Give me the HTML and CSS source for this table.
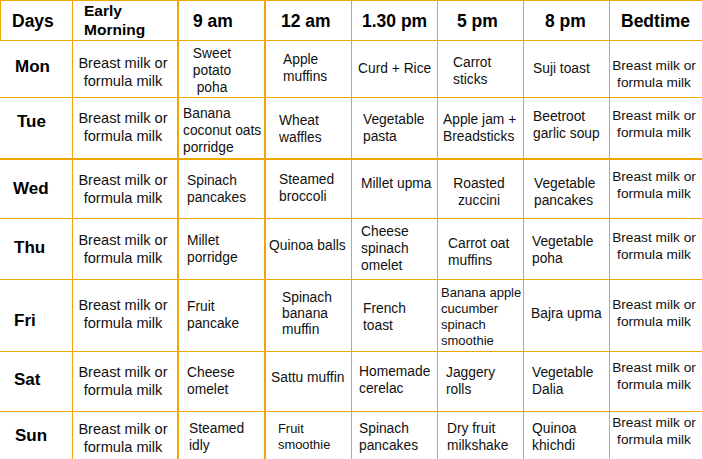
FILE: index.html
```html
<!DOCTYPE html>
<html lang="en">
<head>
<meta charset="utf-8">
<title>Baby diet chart</title>
<link rel="stylesheet" href="styles.css">
</head>
<body>
<div class="chart">
  <div class="row head">
    <div class="cell c1">Days</div>
    <div class="cell c2 early">Early<br>Morning</div>
    <div class="cell c3">9 am</div>
    <div class="cell c4">12 am</div>
    <div class="cell c5">1.30 pm</div>
    <div class="cell c6">5 pm</div>
    <div class="cell c7">8 pm</div>
    <div class="cell c8">Bedtime</div>
  </div>
  <div class="row mon">
    <div class="cell c1 day">Mon</div>
    <div class="cell c2">Breast milk or<br>formula milk</div>
    <div class="cell c3">Sweet<br>potato<br>poha</div>
    <div class="cell c4">Apple<br>muffins</div>
    <div class="cell c5">Curd + Rice</div>
    <div class="cell c6">Carrot<br>sticks</div>
    <div class="cell c7">Suji toast</div>
    <div class="cell c8">Breast milk or<br>formula milk</div>
  </div>
  <div class="row tue">
    <div class="cell c1 day">Tue</div>
    <div class="cell c2">Breast milk or<br>formula milk</div>
    <div class="cell c3">Banana<br>coconut oats<br>porridge</div>
    <div class="cell c4">Wheat<br>waffles</div>
    <div class="cell c5">Vegetable<br>pasta</div>
    <div class="cell c6">Apple jam +<br>Breadsticks</div>
    <div class="cell c7">Beetroot<br>garlic soup</div>
    <div class="cell c8">Breast milk or<br>formula milk</div>
  </div>
  <div class="row wed">
    <div class="cell c1 day">Wed</div>
    <div class="cell c2">Breast milk or<br>formula milk</div>
    <div class="cell c3">Spinach<br>pancakes</div>
    <div class="cell c4">Steamed<br>broccoli</div>
    <div class="cell c5">Millet upma</div>
    <div class="cell c6">Roasted<br>zuccini</div>
    <div class="cell c7">Vegetable<br>pancakes</div>
    <div class="cell c8">Breast milk or<br>formula milk</div>
  </div>
  <div class="row thu">
    <div class="cell c1 day">Thu</div>
    <div class="cell c2">Breast milk or<br>formula milk</div>
    <div class="cell c3">Millet<br>porridge</div>
    <div class="cell c4">Quinoa balls</div>
    <div class="cell c5">Cheese<br>spinach<br>omelet</div>
    <div class="cell c6">Carrot oat<br>muffins</div>
    <div class="cell c7">Vegetable<br>poha</div>
    <div class="cell c8">Breast milk or<br>formula milk</div>
  </div>
  <div class="row fri">
    <div class="cell c1 day">Fri</div>
    <div class="cell c2">Breast milk or<br>formula milk</div>
    <div class="cell c3">Fruit<br>pancake</div>
    <div class="cell c4">Spinach<br>banana<br>muffin</div>
    <div class="cell c5">French<br>toast</div>
    <div class="cell c6">Banana apple<br>cucumber<br>spinach<br>smoothie</div>
    <div class="cell c7">Bajra upma</div>
    <div class="cell c8">Breast milk or<br>formula milk</div>
  </div>
  <div class="row sat">
    <div class="cell c1 day">Sat</div>
    <div class="cell c2">Breast milk or<br>formula milk</div>
    <div class="cell c3">Cheese<br>omelet</div>
    <div class="cell c4">Sattu muffin</div>
    <div class="cell c5">Homemade<br>cerelac</div>
    <div class="cell c6">Jaggery<br>rolls</div>
    <div class="cell c7">Vegetable<br>Dalia</div>
    <div class="cell c8">Breast milk or<br>formula milk</div>
  </div>
  <div class="row sun">
    <div class="cell c1 day">Sun</div>
    <div class="cell c2">Breast milk or<br>formula milk</div>
    <div class="cell c3">Steamed<br>idly</div>
    <div class="cell c4">Fruit<br>smoothie</div>
    <div class="cell c5">Spinach<br>pancakes</div>
    <div class="cell c6">Dry fruit<br>milkshake</div>
    <div class="cell c7">Quinoa<br>khichdi</div>
    <div class="cell c8">Breast milk or<br>formula milk</div>
  </div>
</div>
</body>
</html>
```

FILE: styles.css
```css
html, body {
  margin: 0;
  padding: 0;
  background: #ffffff;
  overflow: hidden;
}

.chart {
  width: 703px;
  font-family: "Liberation Sans", Arial, sans-serif;
  color: #111111;
}

.row {
  display: grid;
  grid-template-columns: 73px 106px 87px 86px 86px 86px 86px 93px;
}

.cell {
  box-sizing: border-box;
  border-right: 1px solid #efa800;
  border-bottom: 1px solid #efa800;
  font-size: 13.8px;
  line-height: 17px;
  white-space: nowrap;
}

.c2, .c3 { border-right-width: 2px; }
.c8 { border-right: none; }

.c2 {
  font-size: 14.6px;
  line-height: 18px;
  text-align: center;
  padding-right: 4px;
}

.c8 {
  font-size: 13.7px;
  line-height: 17px;
  text-align: center;
  padding-right: 5px;
}

.day {
  font-weight: bold;
  font-size: 17px;
  line-height: 20px;
  color: #000000;
}

/* header */
.head { height: 41px; }
.head .cell {
  border-top: 1px solid #efa800;
  display: flex;
  align-items: center;
  font-weight: bold;
  font-size: 17.5px;
  line-height: 20px;
  color: #000000;
  text-align: left;
  padding-right: 0;
}
.head .c1 { border-left: 1px solid #efa800; padding-left: 11px; }
.head .early { font-size: 15.5px; line-height: 18.5px; padding-left: 11px; }
.head .c3 { padding-left: 14px; }
.head .c4 { padding-left: 15px; }
.head .c5 { padding-left: 10px; }
.head .c6 { padding-left: 19px; }
.head .c7 { padding-left: 21px; }
.head .c8 { padding-left: 11px; }

/* row heights */
.mon { height: 57px; }
.tue { height: 62px; }
.tue .cell { border-bottom-width: 2px; }
.wed { height: 59px; }
.thu { height: 61px; }
.fri { height: 72px; }
.sat { height: 60px; }
.sun { height: 50px; }

.tight { font-size: 13px; line-height: 16px; }

/* Mon */
.mon .c1 { padding: 16px 0 0 15px; }
.mon .c2 { padding-top: 13px; }
.mon .c3 { padding-top: 4px; text-align: center; padding-right: 19px; }
.mon .c4 { padding: 10px 0 0 17px; }
.mon .c5 { padding: 19px 0 0 6px; }
.mon .c6 { padding: 13px 0 0 15px; }
.mon .c7 { padding: 19px 0 0 9px; }
.mon .c8 { padding-top: 16px; }

/* Tue */
.tue .c1 { padding: 14px 0 0 17px; }
.tue .c2 { padding-top: 11px; }
.tue .c3 { padding: 7px 0 0 4px; }
.tue .c4 { padding: 14px 0 0 13px; }
.tue .c5 { padding: 13px 0 0 11px; }
.tue .c6 { padding: 13px 0 0 5px; }
.tue .c7 { padding: 10px 0 0 9px; }
.tue .c8 { padding-top: 9px; }

/* Wed */
.wed .c1 { padding: 19px 0 0 13px; }
.wed .c2 { padding-top: 11px; }
.wed .c3 { padding: 12px 0 0 8px; }
.wed .c4 { padding: 11px 0 0 13px; }
.wed .c5 { padding: 15px 0 0 9px; }
.wed .c6 { padding: 15px 3px 0 0; text-align: center; }
.wed .c7 { padding: 15px 0 0 10px; }
.wed .c8 { padding-top: 8px; }

/* Thu */
.thu .c1 { padding: 19px 0 0 14px; }
.thu .c2 { padding-top: 12px; }
.thu .c3 { padding: 13px 0 0 8px; }
.thu .c4 { padding: 18px 0 0 3px; }
.thu .c5 { padding: 4px 0 0 9px; }
.thu .c6 { padding: 16px 0 0 10px; }
.thu .c7 { padding: 14px 0 0 8px; }
.thu .c8 { padding-top: 10px; }

/* Fri */
.fri .c1 { padding: 31px 0 0 14px; }
.fri .c2 { padding-top: 16px; }
.fri .c3 { padding: 18px 0 0 8px; }
.fri .c4 { padding: 10px 0 0 16px; line-height: 16px; }
.fri .c5 { padding: 20px 0 0 11px; }
.fri .c6 { padding: 5px 0 0 3px; font-size: 13px; line-height: 16px; }
.fri .c7 { padding: 25px 0 0 7px; }
.fri .c8 { padding-top: 16px; }

/* Sat */
.sat .c1 { padding: 18px 0 0 14px; }
.sat .c2 { padding-top: 11px; }
.sat .c3 { padding: 12px 0 0 8px; }
.sat .c4 { padding: 17px 0 0 5px; }
.sat .c5 { padding: 11px 0 0 7px; }
.sat .c6 { padding: 12px 0 0 8px; }
.sat .c7 { padding: 12px 0 0 8px; }
.sat .c8 { padding-top: 7px; }

/* Sun */
.sun .c1 { padding: 14px 0 0 15px; }
.sun .c2 { padding-top: 8px; }
.sun .c3 { padding: 8px 0 0 10px; }
.sun .c4 { padding: 9px 0 0 12px; font-size: 12.9px; line-height: 16px; }
.sun .c5 { padding: 8px 0 0 7px; }
.sun .c6 { padding: 8px 0 0 9px; }
.sun .c7 { padding: 8px 0 0 8px; }
.sun .c8 { padding-top: 2px; }
```
